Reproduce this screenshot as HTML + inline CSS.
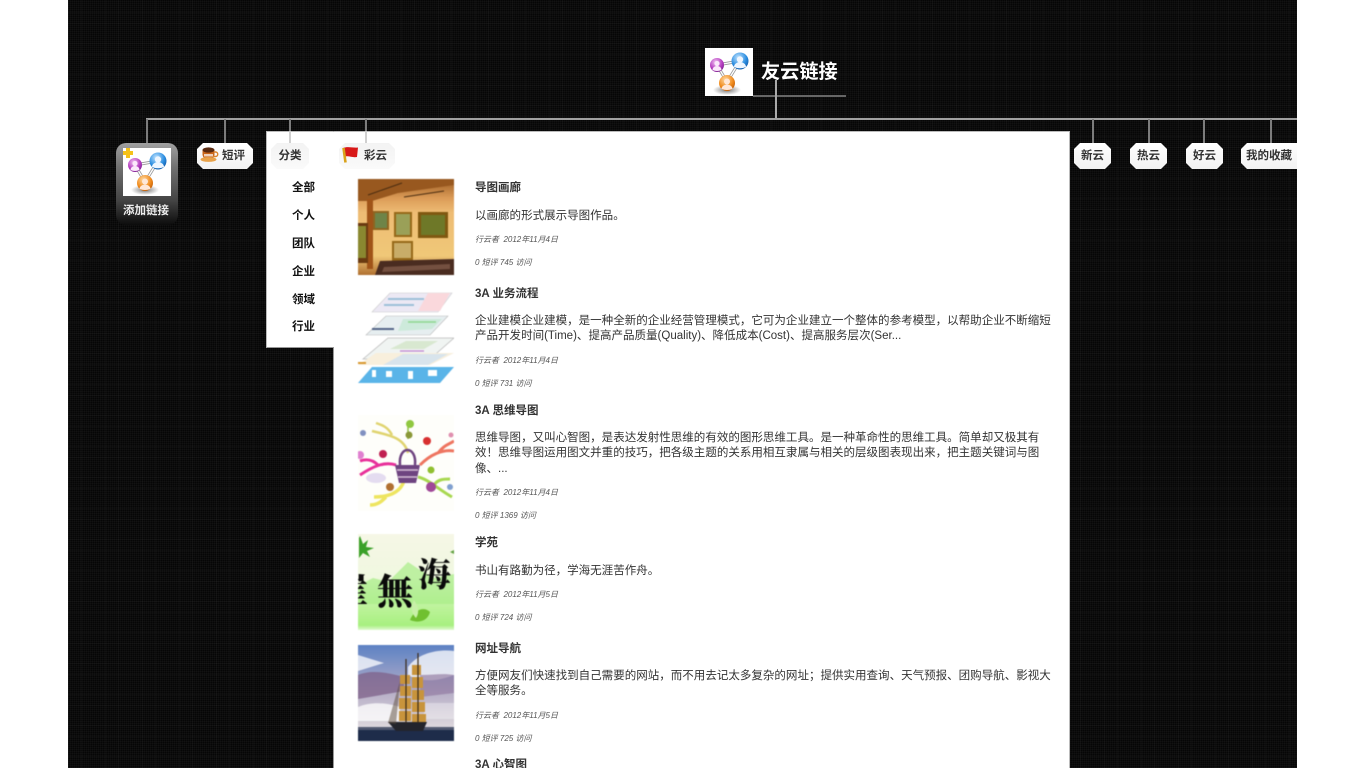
<!DOCTYPE html>
<html lang="zh-CN"><head><meta charset="utf-8"><title>友云链接</title>
<style>
html,body{margin:0;padding:0;background:#fff;width:1366px;height:768px;overflow:hidden}
body{position:relative;font-family:"Liberation Sans","Noto Sans CJK SC",sans-serif;font-size:11.52px;color:#333}
#bg{position:absolute;left:68px;top:0;width:1229px;height:768px;overflow:hidden;background-color:#060606;
background-image:repeating-linear-gradient(90deg,rgba(255,255,255,.02) 0 1px,transparent 1px 13px,rgba(255,255,255,.018) 13px 14px,transparent 14px 37px),repeating-linear-gradient(0deg,rgba(255,255,255,.02) 0 1px,transparent 1px 11px,rgba(255,255,255,.018) 11px 12px,transparent 12px 31px),repeating-linear-gradient(90deg,rgba(255,255,255,.025) 0 1px,transparent 1px 2px),repeating-linear-gradient(0deg,rgba(255,255,255,.025) 0 1px,transparent 1px 2px)}
.a{position:absolute}
.l{position:absolute;background:#7c7c7c}
.tag{position:absolute;top:143px;height:26px;line-height:26px;text-align:center;font-size:11.52px;font-weight:bold;color:#333;background:linear-gradient(180deg,#fff,#f2f2f2);
clip-path:polygon(6px 0,calc(100% - 6px) 0,100% 6px,100% calc(100% - 6px),calc(100% - 6px) 100%,6px 100%,0 calc(100% - 6px),0 6px);white-space:nowrap}
.cat{position:absolute;left:292px;font-size:11.52px;font-weight:bold;color:#111;line-height:16px}
.t{position:absolute;left:475px;font-size:11.52px;font-weight:bold;color:#333;line-height:16px;white-space:nowrap}
.d{position:absolute;left:475px;font-size:11.52px;color:#333;line-height:15.3px;white-space:nowrap}
.m{position:absolute;left:475px;font-size:8px;font-style:italic;color:#555;line-height:12px;white-space:nowrap}
svg{position:absolute;display:block}
.th{filter:blur(.5px)}
</style></head><body>
<div id="bg"></div>

<!-- top node -->
<svg style="left:705px;top:48px" width="48" height="48" viewBox="0 0 48 48">
<defs>
<radialGradient id="gb" cx=".4" cy=".3" r=".8"><stop offset="0" stop-color="#bfe3ff"/><stop offset=".6" stop-color="#2b8de0"/><stop offset="1" stop-color="#0d4f9c"/></radialGradient>
<radialGradient id="gp" cx=".4" cy=".3" r=".8"><stop offset="0" stop-color="#f0c0f0"/><stop offset=".6" stop-color="#b43cc0"/><stop offset="1" stop-color="#6d1a80"/></radialGradient>
<radialGradient id="go" cx=".4" cy=".3" r=".8"><stop offset="0" stop-color="#ffd9a0"/><stop offset=".6" stop-color="#f08a1c"/><stop offset="1" stop-color="#b45408"/></radialGradient>
<radialGradient id="gs"><stop offset="0" stop-color="#777"/><stop offset="1" stop-color="#fff"/></radialGradient>
</defs>
<rect width="48" height="48" fill="#fff"/>
<ellipse cx="22" cy="42" rx="14" ry="5" fill="url(#gs)"/>
<path d="M12 17L35 13M12 17L22 34M35 13L22 34" stroke="#999" stroke-width="3" fill="none"/>
<path d="M12 17L35 13M12 17L22 34M35 13L22 34" stroke="#fff" stroke-width="1.300" fill="none"/>
<circle cx="35" cy="13" r="8.500" fill="url(#gb)"/><circle cx="35" cy="11.500" r="3.200" fill="#eef6ff"/><path d="M29 19a6 5 0 0 1 12 0q-6 2.500-12 0z" fill="#eef6ff"/>
<circle cx="12" cy="17" r="7" fill="url(#gp)"/><circle cx="12" cy="15.500" r="2.600" fill="#fbe8fb"/><path d="M7.500 22a4.500 4 0 0 1 9 0q-4.500 2-9 0z" fill="#fbe8fb"/>
<circle cx="22" cy="35" r="8" fill="url(#go)"/><circle cx="22" cy="33.500" r="3" fill="#ffe8d8"/><path d="M16.500 41a5.500 4.500 0 0 1 11 0q-5.500 2-11 0z" fill="#ffe8d8"/>
</svg>
<div class="a" style="left:761px;top:59px;font-size:19.2px;line-height:28px;font-weight:bold;color:#fff;white-space:nowrap">友云链接</div>
<div class="l" style="left:753px;top:95px;width:93px;height:2px;background:#666"></div>
<div class="l" style="left:775px;top:80px;width:2px;height:39px;background:#aaa"></div>
<div class="l" style="left:146px;top:118px;width:1151px;height:2px;background:#a0a0a0"></div>

<!-- branches -->
<div class="l" style="left:146px;top:119px;width:2px;height:25px"></div>
<div class="l" style="left:224px;top:119px;width:2px;height:25px"></div>
<div class="l" style="left:1092px;top:119px;width:2px;height:25px"></div>
<div class="l" style="left:1148px;top:119px;width:2px;height:25px"></div>
<div class="l" style="left:1203px;top:119px;width:2px;height:25px"></div>
<div class="l" style="left:1270px;top:119px;width:2px;height:25px"></div>

<!-- add link node -->
<div class="a" style="left:116px;top:143px;width:62px;height:82px;border-radius:10px;background:linear-gradient(180deg,#a0a0a0 0,#707070 30%,#444 70%,#0c0c0c 100%)"></div>
<svg style="left:123px;top:148px" width="48" height="48" viewBox="0 0 48 48">
<rect width="48" height="48" fill="#fff"/>
<ellipse cx="22" cy="42" rx="14" ry="5" fill="url(#gs)"/>
<path d="M12 17L35 13M12 17L22 34M35 13L22 34" stroke="#999" stroke-width="3" fill="none"/>
<path d="M12 17L35 13M12 17L22 34M35 13L22 34" stroke="#fff" stroke-width="1.300" fill="none"/>
<circle cx="35" cy="13" r="8.500" fill="url(#gb)"/><circle cx="35" cy="11.500" r="3.200" fill="#eef6ff"/><path d="M29 19a6 5 0 0 1 12 0q-6 2.500-12 0z" fill="#eef6ff"/>
<circle cx="12" cy="17" r="7" fill="url(#gp)"/><circle cx="12" cy="15.500" r="2.600" fill="#fbe8fb"/><path d="M7.500 22a4.500 4 0 0 1 9 0q-4.500 2-9 0z" fill="#fbe8fb"/>
<circle cx="22" cy="35" r="8" fill="url(#go)"/><circle cx="22" cy="33.500" r="3" fill="#ffe8d8"/><path d="M16.500 41a5.500 4.500 0 0 1 11 0q-5.500 2-11 0z" fill="#ffe8d8"/>
<path d="M3 0h4v3h3v4H7v3H3V7H0V3h3z" fill="#f5c21a"/>
</svg>
<div class="a" style="left:115px;top:203px;width:62px;text-align:center;font-size:11.52px;line-height:16px;font-weight:bold;color:#eee">添加链接</div>

<!-- left tags -->
<div class="tag" style="left:197px;width:56px;padding:0"><span style="position:absolute;left:25px;top:0">短评</span></div>
<svg style="left:199px;top:145px" width="20" height="18" viewBox="0 0 20 18">
<path d="M3.500 5h12v5a6 6 0 0 1-6 5a6 6 0 0 1-6-5z" fill="#c9651a"/><ellipse cx="9.500" cy="5" rx="6" ry="2.600" fill="#5a2a10"/>
<path d="M15 7h1.500a2 2 0 0 1 0 4.500H14" fill="none" stroke="#d9822b" stroke-width="1.400"/><ellipse cx="9.500" cy="14.500" rx="8" ry="2.400" fill="#e8a24a"/><path d="M5 9h9v2.500H5z" fill="#fff" opacity=".7"/>
</svg>

<!-- right tags -->
<div class="tag" style="left:1074px;width:37px">新云</div>
<div class="tag" style="left:1130px;width:37px">热云</div>
<div class="tag" style="left:1186px;width:37px">好云</div>
<div class="tag" style="left:1241px;width:56px;clip-path:polygon(6px 0,100% 0,100% 100%,6px 100%,0 calc(100% - 6px),0 6px)">我的收藏</div>

<!-- white panels -->
<div class="a" style="left:266px;top:131px;width:804px;height:217px;background:#fff;box-sizing:border-box;border:1px solid #bbb;border-bottom:1px solid #999"></div>
<div class="a" style="left:333px;top:131px;width:737px;height:637px;background:#fff;box-sizing:border-box;border-right:1px solid #bbb;border-left:1px solid #999;border-top:1px solid #bbb"></div>
<div class="a" style="left:267px;top:132px;width:802px;height:215px;background:#fff"></div>

<div class="l" style="left:289px;top:119px;width:2px;height:25px;background:#d0d0d0"></div>
<div class="l" style="left:365px;top:119px;width:2px;height:25px;background:#d0d0d0"></div>
<div class="l" style="left:289px;top:119px;width:2px;height:12px"></div>
<div class="l" style="left:365px;top:119px;width:2px;height:12px"></div>
<div class="tag" style="left:271px;width:38px;background:linear-gradient(180deg,#f3f3f3,#fafafa)">分类</div>
<div class="tag" style="left:339px;width:56px;background:linear-gradient(180deg,#f3f3f3,#fafafa)"><span style="position:absolute;left:25px;top:0">彩云</span></div>
<svg style="left:341px;top:146px" width="18" height="18" viewBox="0 0 18 18">
<path d="M2 2C7 0 11 2 17 1.500L16 11C11 12 7 9 3.500 11z" fill="#d81818"/><path d="M2.500 2l2 14.500" stroke="#d9a21a" stroke-width="2.600"/>
</svg>

<div class="cat" style="top:180px">全部</div>
<div class="cat" style="top:208px">个人</div>
<div class="cat" style="top:236px">团队</div>
<div class="cat" style="top:264px">企业</div>
<div class="cat" style="top:292px">领域</div>
<div class="cat" style="top:319px">行业</div>

<!-- thumb 1 gallery -->
<svg class="th" style="left:358px;top:179px" width="96" height="96" viewBox="0 0 96 96">
<defs><linearGradient id="w1" x1="0" y1="0" x2="0" y2="1"><stop offset="0" stop-color="#9c5c22"/><stop offset=".2" stop-color="#dc9c58"/><stop offset=".35" stop-color="#eebc74"/><stop offset=".8" stop-color="#f0c878"/><stop offset="1" stop-color="#b07030"/></linearGradient></defs>
<rect width="96" height="96" fill="url(#w1)"/>
<path d="M0 0h96v6L40 14 14 22H0z" fill="#98581f"/>
<path d="M10 16L44 4M46 18l40-6" stroke="#4a2c10" stroke-width="1"/>
<rect x="9" y="20" width="6" height="70" fill="#a05418"/>
<rect x="0" y="44" width="10" height="40" fill="#6a3a10"/><rect x="0" y="47" width="8" height="32" fill="#8a8830"/>
<rect x="15" y="32" width="16" height="19" fill="#8e6420"/><rect x="17" y="34" width="12" height="15" fill="#6e8448"/>
<rect x="36" y="33" width="18" height="25" fill="#966818"/><rect x="38" y="35" width="14" height="21" fill="#9aa058"/>
<rect x="60" y="33" width="30" height="26" fill="#805810"/><rect x="63" y="36" width="24" height="20" fill="#6e7828"/>
<rect x="34" y="62" width="21" height="20" fill="#966818"/><rect x="36" y="64" width="17" height="15" fill="#c8ac68"/>
<path d="M17 96l5-14 74-2v16z" fill="#4a2c20"/><path d="M26 88l66-3v5l-68 3z" fill="#745040"/>
</svg>

<!-- thumb 2 layers -->
<svg class="th" style="left:358px;top:287px" width="96" height="96" viewBox="0 0 96 96">
<rect width="96" height="96" fill="#fff"/>
<path d="M14 25L32 6h62L80 25z" fill="#ece8f4" stroke="#ccc" stroke-width=".6"/><path d="M70 6h22L82 24H60z" fill="#fad8dc"/><path d="M30 12h36M26 18h30" stroke="#9cc0d8" stroke-width="2"/>
<path d="M8 48L28 29h62L72 48z" fill="#e6eef0" stroke="#bbb" stroke-width=".6"/><path d="M40 44l34-2 10-10H45z" fill="#cdeadb"/><path d="M14 42h22" stroke="#556688" stroke-width="2"/><path d="M50 35h28" stroke="#90d890" stroke-width="1.500"/>
<path d="M5 72L30 51h66L72 72z" fill="#f0f4f2" stroke="#bbb" stroke-width=".8"/><path d="M32 62h34l14-8H48z" fill="#d8e8d0"/><path d="M42 64h24" stroke="#c080d0" stroke-width="1.200"/>
<path d="M0 78L18 66h78L72 78z" fill="#f8efdc"/><path d="M25 78h45l20-11H45z" fill="#d8e4ec"/><path d="M0 76h8" stroke="#d89830" stroke-width="2"/>
<path d="M0 96L14 80h82L82 96z" fill="#5ab4e8"/>
<rect x="14" y="83" width="4" height="7" fill="#fff"/><rect x="28" y="84" width="6" height="6" fill="#fff"/><rect x="50" y="84" width="5" height="8" fill="#fff"/><rect x="70" y="83" width="9" height="6" fill="#fff"/>
</svg>

<!-- thumb 3 mindmap -->
<svg class="th" style="left:358px;top:415px" width="96" height="96" viewBox="0 0 96 96">
<rect width="96" height="96" fill="#fefefa"/>
<path d="M50 38C46 22 30 20 14 16M34 20C30 12 24 10 18 8" stroke="#e0d470" stroke-width="2.500" fill="none"/>
<path d="M38 50C26 46 14 52 2 60M20 50C14 44 8 44 2 46" stroke="#e8309a" stroke-width="3" fill="none"/>
<path d="M62 50C72 40 84 34 96 36M80 38C86 30 90 30 96 26" stroke="#ee7560" stroke-width="3" fill="none"/>
<path d="M60 62C70 64 80 74 94 82M76 70C80 64 86 64 92 64" stroke="#a8d850" stroke-width="3" fill="none"/>
<path d="M46 66C42 78 30 82 16 82M28 82C24 86 20 90 12 90" stroke="#eee560" stroke-width="3.500" fill="none"/>
<path d="M50 24V8" stroke="#90c040" stroke-width="1.500"/>
<circle cx="25" cy="39" r="4" fill="#c02050"/><circle cx="69" cy="26" r="4" fill="#d83030"/><circle cx="52" cy="9" r="4" fill="#90c840"/><circle cx="51" cy="20" r="3.500" fill="#8a9838"/><circle cx="73" cy="72" r="5" fill="#a04898"/><circle cx="73" cy="55" r="3.500" fill="#90c030"/><ellipse cx="18" cy="63" rx="10" ry="5" fill="#e4dcf0"/>
<circle cx="5" cy="18" r="3" fill="#8090c0"/><circle cx="32" cy="72" r="4" fill="#b07030"/><circle cx="2" cy="40" r="4" fill="#e080d0"/><circle cx="93" cy="20" r="2.500" fill="#e090b0"/><circle cx="92" cy="72" r="3" fill="#80a0d0"/>
<path d="M37 50h25l-4 18H41z" fill="#6e4480"/><path d="M42 50c-2-20 17-20 15 0" fill="none" stroke="#6e4480" stroke-width="2.500"/><path d="M39 55h21M40 62h19" stroke="#d8c0d8" stroke-width="1.600"/>
</svg>

<!-- thumb 4 calligraphy -->
<svg class="th" style="left:358px;top:534px" width="96" height="96" viewBox="0 0 96 96">
<defs><linearGradient id="g4" x1="0" y1="0" x2="0" y2="1"><stop offset="0" stop-color="#f6f7e6"/><stop offset=".45" stop-color="#f0f8e0"/><stop offset=".7" stop-color="#c4f4a4"/><stop offset=".95" stop-color="#a8f080"/><stop offset="1" stop-color="#e0fad0"/></linearGradient></defs>
<rect width="96" height="96" fill="url(#g4)"/>
<path d="M0 52L15 44 30 48 50 28 62 36 76 44 96 40V70H0z" fill="#a8ec88" opacity=".7"/>
<path d="M2 2l3 8 5-4-2 7 8 1-7 3 3 6-7-4-4 5V4z" fill="#3aa028"/>
<path d="M92 18l4-2v4z" fill="#60a040"/>
<path d="M52 86c4-10 14-14 20-8-2 8-10 12-20 8z" fill="#70c030"/><path d="M56 66c4 6 6 12 2 18-4-4-6-10-2-18z" fill="#c8f0a8"/>
<text x="60" y="52" font-family="'Noto Serif CJK SC',serif" font-weight="900" font-size="33" fill="#0a0a0a">海</text>
<text x="19" y="70" font-family="'Noto Serif CJK SC',serif" font-weight="900" font-size="36" fill="#0a0a0a">無</text>
<text x="-24" y="68" font-family="'Noto Serif CJK SC',serif" font-weight="900" font-size="34" fill="#0a0a0a">崖</text>
</svg>

<!-- thumb 5 ship -->
<svg class="th" style="left:358px;top:645px" width="96" height="96" viewBox="0 0 96 96">
<defs><linearGradient id="s5" x1="0" y1="0" x2="0" y2="1"><stop offset="0" stop-color="#5d82c4"/><stop offset=".5" stop-color="#b8b0c8"/><stop offset=".85" stop-color="#dcd6dc"/></linearGradient></defs>
<rect width="96" height="96" fill="url(#s5)"/>
<path d="M0 10l26 8-26 8zM50 22c10-14 30-18 46-16v24C76 38 60 36 50 30zM0 62c14-6 30-4 42 0v14H0z" fill="#fff" opacity=".75"/>
<path d="M0 30c14-6 30-2 46 2v14L0 54z" fill="#7d6088" opacity=".75"/><path d="M62 30c12 0 24-2 34 0v18l-34 4z" fill="#9078a0" opacity=".65"/><path d="M66 58h30v16H66z" fill="#fff" opacity=".35"/>
<rect y="84" width="96" height="12" fill="#1e2c4a"/><path d="M0 82h96v3H0z" fill="#505870"/>
<path d="M30 77h39l-4 9H38z" fill="#23242c"/>
<path d="M42 30h10v9H42zM42 41h11v10H42zM41 53h12v11H41zM41 66h12v10H41zM54 20h9v10H54zM54 32h11v11H54zM54 45h12v10H54zM54 57h13v10H54zM54 69h14v8H54z" fill="#c8943c"/>
<path d="M48 14v64M60 8v70" stroke="#3a2a18" stroke-width="1.200"/>
<path d="M42 36L30 78l8 1z" fill="#5a4a3a" opacity=".5"/>
</svg>

<div class="t" style="top:180px">导图画廊</div>
<div class="d" style="top:209px">以画廊的形式展示导图作品。</div>
<div class="m" style="top:234px">行云者&nbsp;&nbsp;2012年11月4日</div>
<div class="m" style="top:257px">0 短评 745 访问</div>

<div class="t" style="top:286px">3A 业务流程</div>
<div class="d" style="top:314px">企业建模企业建模，是一种全新的企业经营管理模式，它可为企业建立一个整体的参考模型，以帮助企业不断缩短<br>产品开发时间(Time)、提高产品质量(Quality)、降低成本(Cost)、提高服务层次(Ser...</div>
<div class="m" style="top:355px">行云者&nbsp;&nbsp;2012年11月4日</div>
<div class="m" style="top:378px">0 短评 731 访问</div>

<div class="t" style="top:403px">3A 思维导图</div>
<div class="d" style="top:431px">思维导图，又叫心智图，是表达发射性思维的有效的图形思维工具。是一种革命性的思维工具。简单却又极其有<br>效！思维导图运用图文并重的技巧，把各级主题的关系用相互隶属与相关的层级图表现出来，把主题关键词与图<br>像、...</div>
<div class="m" style="top:487px">行云者&nbsp;&nbsp;2012年11月4日</div>
<div class="m" style="top:510px">0 短评 1369 访问</div>

<div class="t" style="top:535px">学苑</div>
<div class="d" style="top:564px">书山有路勤为径，学海无涯苦作舟。</div>
<div class="m" style="top:589px">行云者&nbsp;&nbsp;2012年11月5日</div>
<div class="m" style="top:612px">0 短评 724 访问</div>

<div class="t" style="top:641px">网址导航</div>
<div class="d" style="top:669px">方便网友们快速找到自己需要的网站，而不用去记太多复杂的网址；提供实用查询、天气预报、团购导航、影视大<br>全等服务。</div>
<div class="m" style="top:710px">行云者&nbsp;&nbsp;2012年11月5日</div>
<div class="m" style="top:733px">0 短评 725 访问</div>

<div class="t" style="top:757px">3A 心智图</div>
</body></html>
